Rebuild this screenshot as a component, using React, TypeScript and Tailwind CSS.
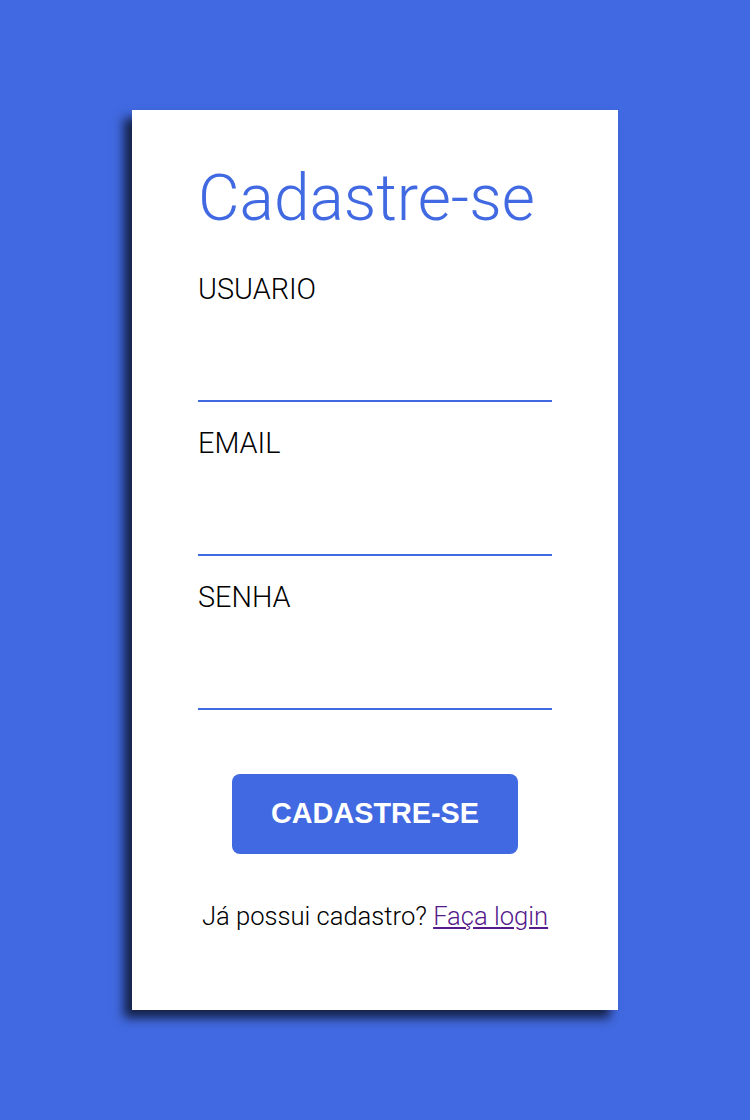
export default function App() {
  return (
    <div className="min-h-[1120px] w-full bg-[#4169e1] flex justify-center pt-[110px]" style={{ fontFamily: "Roboto, sans-serif" }}>
      <div className="w-[486px] h-[900px] bg-white shadow-[-8px_8px_10px_rgba(0,0,0,0.7)] px-[66px] pt-[51px] flex flex-col">
        <h1 className="text-[64px] font-light text-[#4169e1] leading-[1.2]">Cadastre-se</h1>
        <div className="flex flex-col mt-[34px]">
          {["USUARIO", "EMAIL", "SENHA"].map((l) => (
            <div key={l} className="flex flex-col mb-[23.4px]">
              <label className="text-[28.8px] font-light text-black leading-[1.2]">{l}</label>
              <input className="h-[96px] border-b-2 border-[#4169e1] outline-none" />
            </div>
          ))}
        </div>
        <div className="flex justify-center mt-[40px]">
          <button className="w-[286px] h-[80px] rounded-[8px] bg-[#4169e1] text-white font-bold text-[28.8px]" style={{ fontFamily: '"Liberation Sans", Arial, sans-serif' }}>CADASTRE-SE</button>
        </div>
        <p className="text-center text-[25.6px] leading-[1.5] font-light mt-[43px] text-black">
          Já possui cadastro? <a href="#" className="underline text-[#551a8b]">Faça login</a>
        </p>
      </div>
    </div>
  );
}
